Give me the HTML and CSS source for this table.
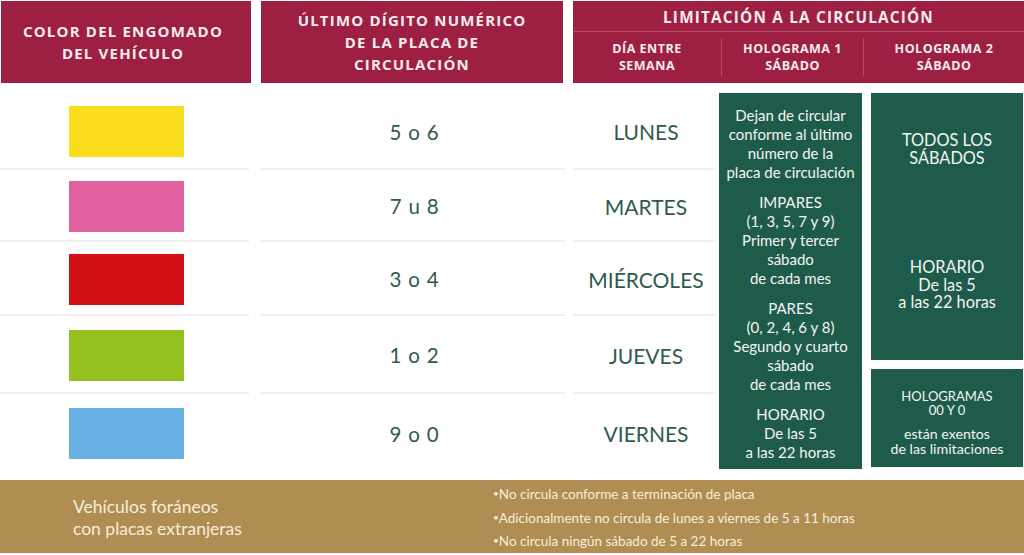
FILE: index.html
```html
<!DOCTYPE html>
<html lang="es">
<head>
<meta charset="utf-8">
<title>Hoy No Circula</title>
<link rel="stylesheet" href="styles.css">
</head>
<body>
<div class="page">
  <div class="head">
    <div class="hcell hc1">COLOR DEL ENGOMADO<br>DEL VEHÍCULO</div>
    <div class="hcell hc2">ÚLTIMO DÍGITO NUMÉRICO<br>DE LA PLACA DE<br>CIRCULACIÓN</div>
    <div class="hcell hc3">
      <div class="htitle">LIMITACIÓN A LA CIRCULACIÓN</div>
      <div class="subheads">
        <div class="sub">DÍA ENTRE<br>SEMANA</div>
        <div class="sub sub-div">HOLOGRAMA 1<br>SÁBADO</div>
        <div class="sub sub-div">HOLOGRAMA 2<br>SÁBADO</div>
      </div>
    </div>
  </div>

  <div class="grid">
    <div class="cell c-color r1"><span class="swatch yellow"></span></div>
    <div class="cell c-num r1">5 o 6</div>
    <div class="cell c-day r1">LUNES</div>

    <div class="cell c-color r2"><span class="swatch pink"></span></div>
    <div class="cell c-num r2">7 u 8</div>
    <div class="cell c-day r2">MARTES</div>

    <div class="cell c-color r3"><span class="swatch red"></span></div>
    <div class="cell c-num r3">3 o 4</div>
    <div class="cell c-day r3">MIÉRCOLES</div>

    <div class="cell c-color r4"><span class="swatch green"></span></div>
    <div class="cell c-num r4">1 o 2</div>
    <div class="cell c-day r4">JUEVES</div>

    <div class="cell c-color r5 last"><span class="swatch blue"></span></div>
    <div class="cell c-num r5 last">9 o 0</div>
    <div class="cell c-day r5 last">VIERNES</div>

    <div class="box holo1">
      <p>Dejan de circular<br>conforme al último<br>número de la<br>placa de circulación</p>
      <p>IMPARES<br>(1, 3, 5, 7 y 9)<br>Primer y tercer<br>sábado<br>de cada mes</p>
      <p>PARES<br>(0, 2, 4, 6 y 8)<br>Segundo y cuarto<br>sábado<br>de cada mes</p>
      <p>HORARIO<br>De las 5<br>a las 22 horas</p>
    </div>

    <div class="holo2col">
      <div class="box holo2">
        <p>TODOS LOS<br>SÁBADOS</p>
        <p>HORARIO<br>De las 5<br>a las 22 horas</p>
      </div>
      <div class="box holo0">
        <p class="caps">HOLOGRAMAS<br>00 Y 0</p>
        <p class="lower">están exentos<br>de las limitaciones</p>
      </div>
    </div>
  </div>

  <div class="foot">
    <div class="foot-left">Vehículos foráneos<br>con placas extranjeras</div>
    <ul class="foot-list">
      <li>No circula conforme a terminación de placa</li>
      <li>Adicionalmente no circula de lunes a viernes de 5 a 11 horas</li>
      <li>No circula ningún sábado de 5 a 22 horas</li>
    </ul>
  </div>
</div>
</body>
</html>
```

FILE: styles.css
```css
* { box-sizing: border-box; }
html, body { margin: 0; padding: 0; background: #ffffff; }
body { width: 1024px; height: 555px; overflow: hidden; font-family: "Lato", "Liberation Sans", sans-serif; }

.page { padding-top: 1px; }

/* ---------- header ---------- */
.head {
  display: grid;
  grid-template-columns: 250px 302px 451px;
  column-gap: 10px;
  margin-left: 1px;
  height: 82px;
}
.hcell {
  background: #9d1f42;
  color: #f6ecef;
  font-family: "Open Sans", "Liberation Sans", sans-serif;
  font-weight: 700;
  font-size: 15px;
  letter-spacing: 1.2px;
  text-align: center;
  display: flex;
  align-items: center;
  justify-content: center;
}
.hc1 { line-height: 22px; padding-right: 6px; }
.hc2 { line-height: 22px; }
.hc3 {
  flex-direction: column;
  align-items: stretch;
  justify-content: flex-start;
}
.htitle {
  height: 31px;
  line-height: 33px;
  border-bottom: 1px solid #b34d69;
  font-size: 15.3px;
}
.subheads {
  display: grid;
  grid-template-columns: 148px 142px 1fr;
  padding: 6px 0 7px;
  flex: 1;
}
.sub {
  font-size: 12.5px;
  line-height: 17px;
  letter-spacing: 0.5px;
  display: flex;
  align-items: center;
  justify-content: center;
}
.sub-div { border-left: 1px solid #b34d69; }

/* ---------- body grid ---------- */
.grid {
  display: grid;
  grid-template-columns: 251px 9px 305px 8px 142px 4px 143px 9px 152px;
  grid-template-rows: 77px 72px 74px 78px 77px;
  margin-top: 10px;
}
.cell {
  display: flex;
  align-items: center;
  justify-content: center;
  border-bottom: 2px solid #eeeeee;
  padding-top: 2px;
}
.cell.last { border-bottom: none; }
.r1 { grid-row: 1; }
.r2 { grid-row: 2; }
.r3 { grid-row: 3; }
.r4 { grid-row: 4; }
.r5 { grid-row: 5; }
.c-color { grid-column: 1; width: 249px; }
.c-num {
  grid-column: 3;
  color: #2e5b4e;
  font-size: 20.5px;
  letter-spacing: 0.8px;
  padding-left: 4px;
}
.c-day {
  grid-column: 5;
  color: #2e5b4e;
  font-size: 21px;
  letter-spacing: 0;
  padding-left: 4px;
}
.swatch { display: block; width: 115px; height: 51px; margin-left: 4px; }
.yellow { background: #f9dc1b; }
.pink { background: #df5f9f; }
.red { background: #d31016; }
.green { background: #94c020; }
.blue { background: #66afe1; }

.box {
  background: #1f5b4b;
  color: #f2f5f3;
  text-align: center;
}
.box p { margin: 0; }
.holo1 {
  grid-column: 7;
  grid-row: 1 / 6;
  height: 376px;
  padding-top: 13px;
  font-size: 15px;
  line-height: 19px;
}
.holo1 p + p { margin-top: 11px; }

.holo2col {
  grid-column: 9;
  grid-row: 1 / 6;
  display: flex;
  flex-direction: column;
  gap: 9px;
}
.holo2 {
  height: 267px;
  font-size: 16.3px;
  line-height: 17.5px;
  padding-top: 38px;
}
.holo2 p + p { margin-top: 92px; }
.holo0 {
  height: 98px;
  padding-top: 20px;
}
.holo0 .caps { font-size: 13px; line-height: 14px; }
.holo0 .lower { font-size: 14.2px; line-height: 15px; margin-top: 9px; }

/* ---------- footer ---------- */
.foot {
  margin-top: 9px;
  height: 73px;
  background: #b08d52;
  color: #f7eddc;
  display: grid;
  grid-template-columns: 493px 1fr;
  align-items: center;
}
.foot-left {
  padding-left: 73px;
  font-size: 17.5px;
  line-height: 22px;
  padding-top: 2px;
}
.foot-list {
  list-style: none;
  margin: 0;
  padding: 2px 0 0;
  font-size: 13.5px;
  line-height: 22.5px;
}
.foot-list li::before { content: "•"; font-size: 10px; vertical-align: 2px; }
```
